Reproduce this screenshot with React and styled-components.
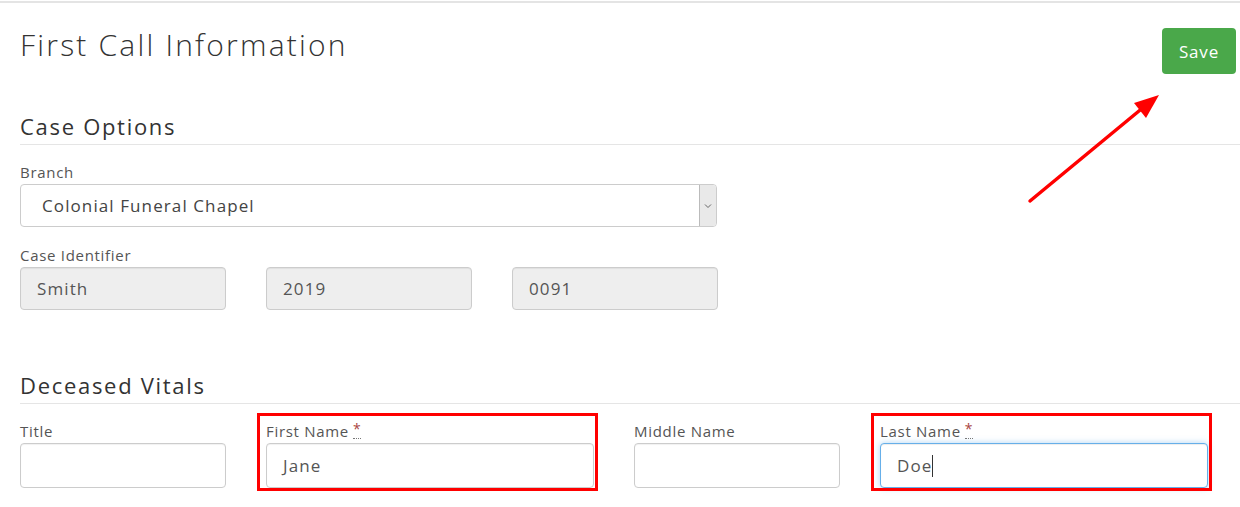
import styled, { createGlobalStyle } from 'styled-components'

const GlobalStyle = createGlobalStyle`
  html, body {
    margin: 0;
    padding: 0;
    background: #fff;
  }
  body {
    font-family: 'Open Sans', 'Liberation Sans', sans-serif;
    letter-spacing: 1.1px;
    color: #333;
  }
`

const Page = styled.div`
  position: relative;
  width: 1240px;
  height: 507px;
  box-sizing: border-box;
  overflow: hidden;
  border-top: 2px solid #e4e4e4;
  margin-top: 1px;
  padding-left: 20px;
`

const Header = styled.div`
  display: flex;
  justify-content: space-between;
  align-items: flex-start;
  padding-right: 4px;
`

const Title = styled.h1`
  margin: 22px 0 0;
  font-size: 30px;
  font-weight: 300;
  line-height: 40px;
  letter-spacing: 2.2px;
  color: #333;
`

const SaveButton = styled.button`
  margin-top: 25px;
  width: 74px;
  height: 46px;
  border: none;
  border-radius: 4px;
  background: #4aa84a;
  color: #fff;
  font-family: inherit;
  letter-spacing: 0.8px;
  font-size: 17px;
  cursor: pointer;
`

const SectionTitle = styled.h3`
  margin: ${props => props.top}px 0 0;
  padding-bottom: 2px;
  font-size: 22px;
  font-weight: 400;
  line-height: 32px;
  letter-spacing: 1.7px;
  color: #333;
  border-bottom: 1px solid #e5e5e5;
`

const Group = styled.div`
  margin-top: ${props => props.top}px;
  width: 697px;
`

const Label = styled.div`
  font-size: 15px;
  line-height: 20px;
  color: #555;
  margin-bottom: 2px;
  letter-spacing: 0.7px;
`

const Required = styled.abbr`
  position: relative;
  top: -3px;
  color: #a94442;
  text-decoration: none;
  border-bottom: 1px dotted #777;
  margin-left: 4px;
  font-size: 14px;
  line-height: 12px;
`

const SelectBox = styled.div`
  display: flex;
  height: 43px;
  box-sizing: border-box;
  border: 1px solid #ccc;
  border-radius: 4px;
  overflow: hidden;
`

const SelectText = styled.div`
  flex: 1;
  display: flex;
  align-items: center;
  padding-left: 21px;
  font-size: 17px;
  color: #444;
`

const SelectArrow = styled.div`
  width: 16px;
  display: flex;
  align-items: center;
  justify-content: center;
  background: #e9e9e9;
  border-left: 1px solid #bbb;
`

const IdRow = styled.div`
  display: grid;
  grid-template-columns: 206px 206px 206px;
  column-gap: 40px;
`

const VitalsRow = styled.div`
  display: grid;
  grid-template-columns: 206px 328px 206px 328px;
  column-gap: 40px;
  margin-top: 17px;
`

const Field = styled.div`
  position: relative;
  &::after {
    content: '';
    display: ${props => (props.marked ? 'block' : 'none')};
    position: absolute;
    top: -8px;
    left: -9px;
    right: -4px;
    bottom: -3px;
    border: 3px solid #f00;
    pointer-events: none;
  }
`

const Input = styled.div`
  height: ${props => props.h || 43}px;
  box-sizing: border-box;
  display: flex;
  align-items: center;
  padding-left: 16px;
  border: 1px solid ${props => (props.focused ? '#66afe9' : '#ccc')};
  border-radius: 4px;
  background: ${props => (props.disabled ? '#eee' : '#fff')};
  box-shadow: ${props =>
    props.focused
      ? 'inset 0 1px 1px rgba(0,0,0,.075), 0 0 6px rgba(102,175,233,.5)'
      : 'inset 0 1px 1px rgba(0,0,0,.06)'};
  font-size: 17px;
  color: #555;
`

const Caret = styled.span`
  display: inline-block;
  width: 1px;
  height: 22px;
  background: #333;
`

const Arrow = styled.svg`
  position: absolute;
  left: 1020px;
  top: 80px;
  pointer-events: none;
`

const Chevron = () => (
  <svg width="8" height="6" viewBox="0 0 8 6">
    <path d="M1 1.5 L4 4.5 L7 1.5" fill="none" stroke="#666" strokeWidth="1" />
  </svg>
)

const App = () => {
  return (
    <Page>
      <GlobalStyle />
      <Header>
        <Title>First Call Information</Title>
        <SaveButton>Save</SaveButton>
      </Header>

      <SectionTitle top={36}>Case Options</SectionTitle>
      <Group top={17}>
        <Label>Branch</Label>
        <SelectBox>
          <SelectText>Colonial Funeral Chapel</SelectText>
          <SelectArrow>
            <Chevron />
          </SelectArrow>
        </SelectBox>
      </Group>
      <Group top={18}>
        <Label>Case Identifier</Label>
        <IdRow>
          <Input disabled>Smith</Input>
          <Input disabled>2019</Input>
          <Input disabled>0091</Input>
        </IdRow>
      </Group>

      <SectionTitle top={59}>Deceased Vitals</SectionTitle>
      <VitalsRow>
        <Field>
          <Label>Title</Label>
          <Input h={45} />
        </Field>
        <Field marked>
          <Label>
            First Name<Required title="required">*</Required>
          </Label>
          <Input h={45}>Jane</Input>
        </Field>
        <Field>
          <Label>Middle Name</Label>
          <Input h={45} />
        </Field>
        <Field marked>
          <Label>
            Last Name<Required title="required">*</Required>
          </Label>
          <Input h={45} focused>
            Doe
            <Caret />
          </Input>
        </Field>
      </VitalsRow>

      <Arrow width="150" height="130" viewBox="0 0 150 130">
        <line x1="10" y1="118" x2="125" y2="23" stroke="#f00" strokeWidth="3.5" strokeLinecap="round" />
        <polygon points="139,12 114,20 126,35" fill="#f00" />
      </Arrow>
    </Page>
  )
}

export default App
